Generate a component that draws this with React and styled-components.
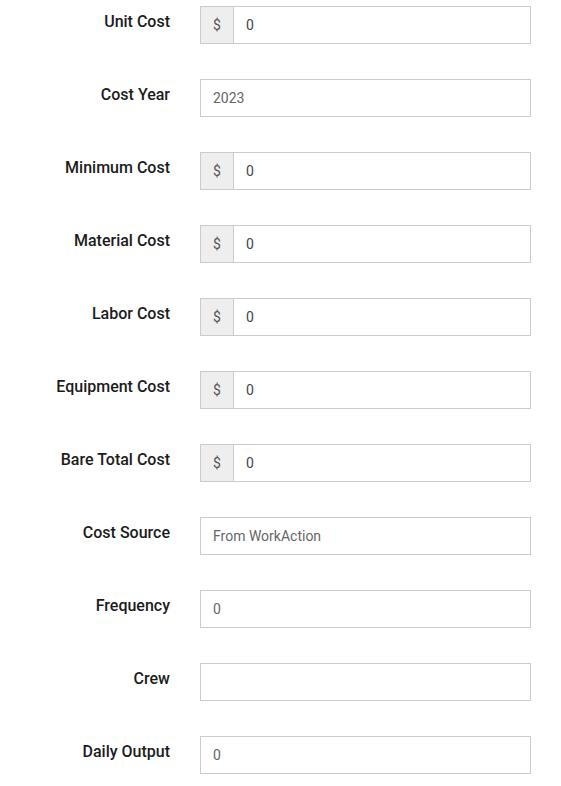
import React from 'react';
import styled, { createGlobalStyle } from 'styled-components';

const Global = createGlobalStyle`
    body {
        margin: 0;
        background: #fff;
        font-family: Roboto, "Liberation Sans", sans-serif;
    }
`;

const Form = styled.div`
    display: flex;
    flex-direction: column;
    gap: 35px;
    padding-top: 6px;
`;

const Row = styled.div`
    display: grid;
    grid-template-columns: 170px 331px;
    column-gap: 30px;
    height: 38px;
`;

const Label = styled.label`
    text-align: right;
    font-size: 16px;
    font-weight: 500;
    color: #1c1c1c;
    line-height: 18px;
    padding-top: 7px;
`;

const Group = styled.div`
    display: flex;
    border: 1px solid #ccc;
    box-sizing: border-box;
    height: 38px;
`;

const Addon = styled.span`
    width: 32px;
    flex: none;
    display: flex;
    align-items: center;
    justify-content: center;
    background: #eee;
    border-right: 1px solid #ccc;
    color: #555;
    font-size: 14px;
    padding-bottom: 1px;
`;

const Value = styled.span`
    flex: 1;
    display: flex;
    align-items: center;
    padding: 0 0 1px 12px;
    font-size: 14px;
    color: ${p => (p.$addon ? '#3a4654' : '#666')};
`;

const fields = [
    { label: 'Unit Cost', value: '0', money: true },
    { label: 'Cost Year', value: '2023' },
    { label: 'Minimum Cost', value: '0', money: true },
    { label: 'Material Cost', value: '0', money: true },
    { label: 'Labor Cost', value: '0', money: true },
    { label: 'Equipment Cost', value: '0', money: true },
    { label: 'Bare Total Cost', value: '0', money: true },
    { label: 'Cost Source', value: 'From WorkAction' },
    { label: 'Frequency', value: '0' },
    { label: 'Crew', value: '' },
    { label: 'Daily Output', value: '0' },
];

export default function App() {
    return (
        <>
            <Global />
            <Form>
                {fields.map(f => (
                    <Row key={f.label}>
                        <Label>{f.label}</Label>
                        <Group>
                            {f.money && <Addon>$</Addon>}
                            <Value $addon={f.money}>{f.value}</Value>
                        </Group>
                    </Row>
                ))}
            </Form>
        </>
    );
}
